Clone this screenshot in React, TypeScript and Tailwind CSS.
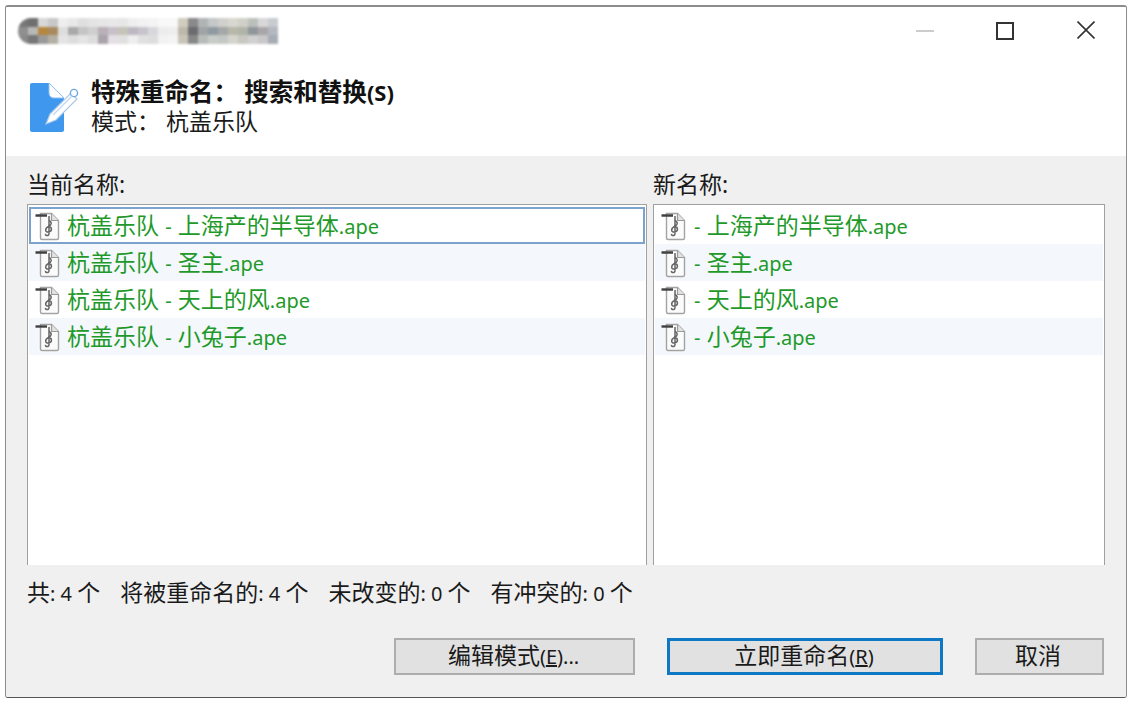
// pixelated app title, three rows per column
const mosaicCols = [
  ["#777777", "#8f8f8f", "#8a8a8a"],
  ["#6f6f6f", "#b8b8b8", "#777777"],
  ["#d8d8d8", "#b5873f", "#9a9a9a"],
  ["#c8c8c8", "#a98a60", "#b5b0a5"],
  ["#eeeeee", "#dddddd", "#e4e4e4"],
  ["#e8e8e8", "#a9a9a9", "#dddddd"],
  ["#dfdfdf", "#c4c4c4", "#e4e4e4"],
  ["#e4e4e4", "#cfcfcf", "#dddddd"],
  ["#e6e6e6", "#b9b0b8", "#aaa3ab"],
  ["#e8e8e8", "#c8c0c8", "#e4dfe4"],
  ["#e6e6e6", "#c4c4b8", "#e0e0e0"],
  ["#efefef", "#bdb8c2", "#eeeeee"],
  ["#f2f2f2", "#c8c4cc", "#e0e0e0"],
  ["#f4f4f4", "#d8d8dc", "#dddddd"],
  ["#f8f8f8", "#ececec", "#f2f2f2"],
  ["#f8f8f8", "#eeeeee", "#f4f4f4"],
  ["#d0ccbe", "#bdb9aa", "#c8c4b8"],
  ["#8a8a8a", "#6b6b70", "#888888"],
  ["#b0b4b4", "#a0a4a6", "#b8bcb8"],
  ["#c4c8c8", "#8f9aa0", "#c8ccc8"],
  ["#d0d0cc", "#a4a8a8", "#c4c8c4"],
  ["#d8d8d0", "#b8b8aa", "#d4d4cc"],
  ["#d0d0c8", "#b0b4a8", "#c8c8c0"],
  ["#bcc0bc", "#8f979a", "#d0d0d0"],
  ["#d8d8d8", "#aaa6a8", "#c8c8c8"],
  ["#c8ccd0", "#b4b8c0", "#a8acb4"],
];

const rows = ["上海产的半导体", "圣主", "天上的风", "小兔子"];

function MusicFileIcon() {
  return (
    <svg width="28" height="30" viewBox="0 0 28 30" fill="none" className="shrink-0">
      <path d="M6.5 2.5H17.5L24.5 9.5V27C24.5 28 24 28.5 23 28.5H8C7 28.5 6.5 28 6.5 27Z" fill="#fbfbfb" stroke="#a3a3a3" strokeWidth="1.4" />
      <path d="M17.5 2.5V9.5H24.5" fill="#e2e2e2" stroke="#999999" strokeWidth="1.2" />
      <path d="M1.5 4.5H13" stroke="#404040" strokeWidth="2.4" />
      <path
        d="M15 5V22.5C15 25.5 11 25 11.5 22.8M15 9C18 11.5 18 13.5 14.5 15.5C10.5 17.5 11 21.5 14.5 21C18.5 20.5 18.5 15.5 14 15.5"
        stroke="#666666"
        strokeWidth="1.5"
      />
    </svg>
  );
}

function Latin({ children }: { children: React.ReactNode }) {
  return <span className="text-[20px]">{children}</span>;
}

function FileRow({ prefix, name, striped, focused, iconGap }: { prefix: string; name: string; striped: boolean; focused?: boolean; iconGap: string }) {
  return (
    <div
      className={`flex h-[37px] items-center border-2 pl-[3px] text-[23px] text-[#1f9a2a] ${iconGap} ${striped ? "bg-[#f4f8fc]" : ""} ${
        focused ? "border-[#7da2ce]" : "border-transparent"
      }`}
    >
      <MusicFileIcon />
      <span className="whitespace-nowrap">
        {prefix}
        {prefix ? <span className="mx-px text-[20px]"> - </span> : <span className="mr-px text-[20px]">- </span>}
        {name}
        <Latin>.ape</Latin>
      </span>
    </div>
  );
}

function DialogButton({ width, primary, children }: { width: string; primary?: boolean; children: React.ReactNode }) {
  return (
    <button
      className={`flex h-[37px] items-center justify-center bg-[#e1e1e1] pb-[2px] text-[23px] text-[#1a1a1a] ${width} ${
        primary ? "border-[3px] border-[#0f78c4]" : "border-2 border-[#adadad]"
      }`}
    >
      {children}
    </button>
  );
}

export default function App() {
  return (
    <div className="h-[701px] w-[1132px] overflow-hidden bg-white p-[5px] font-['Noto_Sans','Noto_Sans_CJK_SC',sans-serif]">
      <div className="flex h-[693px] w-[1122px] flex-col overflow-hidden rounded-[3px] border border-t-2 border-[#8c8c8c] border-b-[#555555]">
        <header className="h-[149px] shrink-0 bg-white">
          <div className="flex h-[50px] items-start justify-between">
            <div className="ml-[12px] mt-[11px] flex h-[26px] overflow-hidden rounded-l-full blur-[1px]">
              {mosaicCols.map((col, i) => (
                <div key={i} className="flex h-full w-[10px] flex-col">
                  {col.map((c, j) => (
                    <div key={j} className="flex-1" style={{ backgroundColor: c }} />
                  ))}
                </div>
              ))}
            </div>
            <div className="flex items-start">
              <div className="mr-[62px] mt-[23px] h-[2px] w-[18px] bg-[#cccccc]" />
              <div className="mr-[63px] mt-[15px] h-[18px] w-[18px] border-2 border-[#333333]" />
              <svg width="18" height="18" viewBox="0 0 18 18" className="mr-[31px] mt-[14px]">
                <path d="M0.5 0.5L17.5 17.5M17.5 0.5L0.5 17.5" stroke="#333333" strokeWidth="1.6" />
              </svg>
            </div>
          </div>
          <div className="ml-[24px] mt-[20px] flex items-start gap-[11px]">
            <svg width="50" height="50" viewBox="0 0 50 50" className="mt-[6px] shrink-0">
              <path d="M0 2C0 0.8 0.8 0 2 0H19L34 15V47C34 48.2 33.2 49 32 49H2C0.8 49 0 48.2 0 47Z" fill="#3f97ee" />
              <path d="M19 0V10C19 13 21 15 24 15H34Z" fill="#ffffff" stroke="#8fc0f4" strokeWidth="1" />
              <path d="M20 31L41 10L47 16L26 37L16 41Z" fill="#ffffff" stroke="#a9c8e8" strokeWidth="1.2" />
              <circle cx="44" cy="10" r="3.6" fill="#ffffff" stroke="#6fa8e0" strokeWidth="1.4" />
              <path d="M23 32L42 13" stroke="#c4daf2" strokeWidth="1.4" />
            </svg>
            <div className="flex flex-col leading-[29px] text-[#1a1a1a]">
              <div className="whitespace-nowrap text-[24.5px] font-bold text-[#111111]">
                特殊重命名： 搜索和替换<span className="text-[22px]">(S)</span>
              </div>
              <div className="whitespace-nowrap text-[23px]">模式： 杭盖乐队</div>
            </div>
          </div>
        </header>

        <main className="flex min-h-0 flex-1 flex-col bg-[#f0f0f0] pl-[21px] pr-[21px]">
          <div className="flex h-[409px] shrink-0 gap-[6px] pt-[14px]">
            <section className="flex w-[620px] flex-col">
              <div className="h-[34px] text-[23px] leading-[28px] text-[#1a1a1a]">当前名称:</div>
              <div className="flex-1 border border-b-0 border-[#a0a0a0] bg-white px-px pt-[2px]">
                {rows.map((name, i) => (
                  <FileRow key={name} prefix="杭盖乐队" name={name} striped={i % 2 === 1} focused={i === 0} iconGap="gap-[5px]" />
                ))}
              </div>
            </section>
            <section className="flex w-[452px] flex-col">
              <div className="h-[34px] text-[23px] leading-[28px] text-[#1a1a1a]">新名称:</div>
              <div className="flex-1 border border-b-0 border-[#a0a0a0] bg-white px-px pt-[2px]">
                {rows.map((name, i) => (
                  <FileRow key={name} prefix="" name={name} striped={i % 2 === 1} iconGap="gap-[6px]" />
                ))}
              </div>
            </section>
          </div>

          <div className="mt-[9px] flex h-[36px] items-center gap-[20px] whitespace-nowrap text-[23px] text-[#1a1a1a]">
            <span>共<Latin>: 4 </Latin>个</span>
            <span>将被重命名的<Latin>: 4 </Latin>个</span>
            <span>未改变的<Latin>: 0 </Latin>个</span>
            <span>有冲突的<Latin>: 0 </Latin>个</span>
          </div>

          <div className="mt-[28px] flex">
            <div className="ml-[367px]">
              <DialogButton width="w-[241px]">
                <span className="pr-[2px]">编辑模式<Latin>(<span className="underline">E</span>)...</Latin></span>
              </DialogButton>
            </div>
            <div className="ml-[32px]">
              <DialogButton width="w-[276px]" primary>
                <span className="pr-[2px]">立即重命名<Latin>(<span className="underline">R</span>)</Latin></span>
              </DialogButton>
            </div>
            <div className="ml-[32px]">
              <DialogButton width="w-[129px]">
                <span className="pr-[3px]">取消</span>
              </DialogButton>
            </div>
          </div>
        </main>
      </div>
    </div>
  );
}
